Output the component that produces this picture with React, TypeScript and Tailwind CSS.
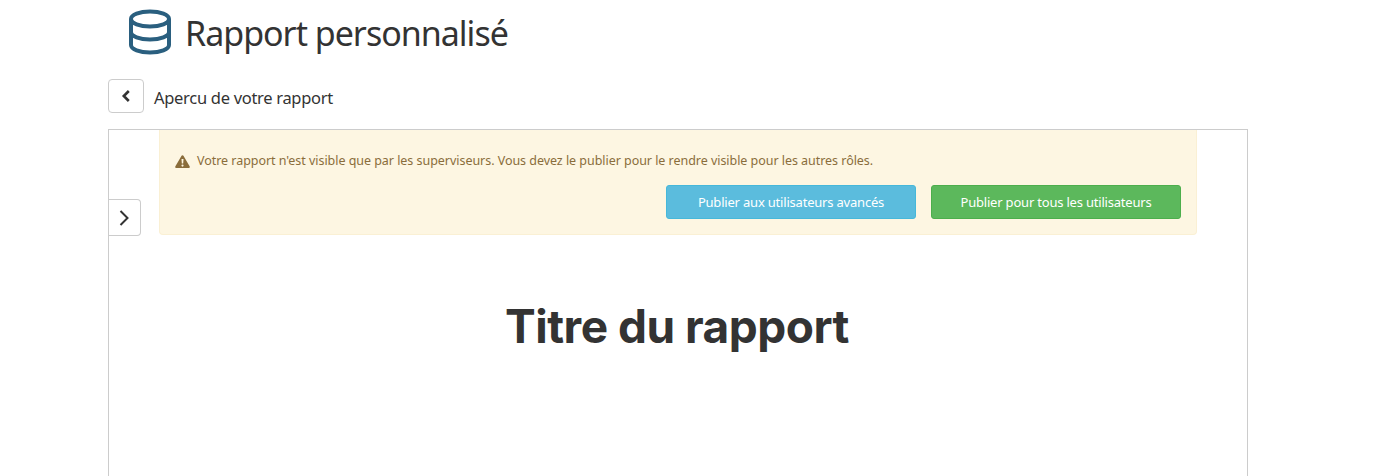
import React from "react";

export default function App() {
  return (
    <div className="w-[1384px] h-[476px] overflow-hidden bg-white font-['Noto_Sans',sans-serif] text-[#333]">
      <div className="flex items-center h-[64px] pl-[129px] gap-[14px]">
        <svg width="42" height="46" viewBox="0 0 42 46" fill="none" stroke="#2a5f7f" strokeWidth="4" className="shrink-0">
          <ellipse cx="21" cy="10" rx="19" ry="7.5" />
          <path d="M2 10V36c0 4.200 8.500 7.500 19 7.500S40 40.200 40 36V10" />
          <path d="M2 23c0 4.200 8.500 7.500 19 7.500S40 27.200 40 23" />
        </svg>
        <h1 className="text-[34px] leading-none font-normal tracking-[-1px] text-[#333] pt-[2px]">Rapport personnalisé</h1>
      </div>
      <div className="flex items-center h-[34px] mt-[15px] ml-[108px] gap-[10px]">
        <button className="w-[36px] h-[34px] flex items-center justify-center border border-[#ccc] rounded-[4px] bg-white">
          <svg width="10" height="12" viewBox="0 0 10 12" fill="none" stroke="#333" strokeWidth="2.600">
            <path d="M7.800 1 2.800 6l5 5" />
          </svg>
        </button>
        <span className="text-[16.500px] tracking-[-0.3px] text-[#333] pt-[4px]">Apercu de votre rapport</span>
      </div>
      <div className="relative mt-[16px] ml-[108px] w-[1140px] h-[400px] border border-[#ccc] border-b-0 px-[50px]">
        <button className="absolute left-0 top-[69px] w-[32px] h-[37px] flex items-center justify-center border border-[#ccc] border-l-0 rounded-r-[4px] bg-white pr-[2px]">
          <svg width="12" height="18" viewBox="0 0 12 18" fill="none" stroke="#333" strokeWidth="2">
            <path d="M2.500 2l7 7-7 7" />
          </svg>
        </button>
        <div className="h-[105px] bg-[#fdf6e2] border border-t-0 border-[#faf0d4] rounded-b-[4px] px-[15px]">
          <div className="flex items-center gap-[7px] pt-[21px] h-[42px] text-[12.500px] tracking-[-0.04px] text-[#8a6d3b]">
            <svg width="15" height="13" viewBox="0 0 15 13" fill="#8a6d3b" className="shrink-0">
              <path fillRule="evenodd" d="M7.500 0.300c.5 0 .9.300 1.100.700l6 10.300c.5.800-.1 1.700-1 1.700H1.400c-.9 0-1.500-.9-1-1.700L6.400 1c.2-.4.600-.7 1.100-.7ZM6.500 4l.3 4.600h1.400L8.500 4h-2Zm1 5.500a1.100 1.100 0 1 0 0 2.200 1.100 1.100 0 0 0 0-2.200Z" />
            </svg>
            <span>Votre rapport n'est visible que par les superviseurs. Vous devez le publier pour le rendre visible pour les autres rôles.</span>
          </div>
          <div className="flex justify-end gap-[15px] mt-[13px]">
            <button className="w-[250px] h-[34px] rounded-[3px] bg-[#5bbcdd] border border-[#46b8da] text-white text-[13px] tracking-[-0.2px] pt-[1px]">Publier aux utilisateurs avancés</button>
            <button className="w-[250px] h-[34px] rounded-[3px] bg-[#5cb85c] border border-[#4cae4c] text-white text-[13px] tracking-[-0.2px] pt-[1px]">Publier pour tous les utilisateurs</button>
          </div>
        </div>
        <h2 className="mt-[62px] text-center text-[46px] leading-[58px] font-bold font-['Inter',sans-serif] text-[#333] tracking-[-0.5px] pr-[2px]">Titre du rapport</h2>
      </div>
    </div>
  );
}
